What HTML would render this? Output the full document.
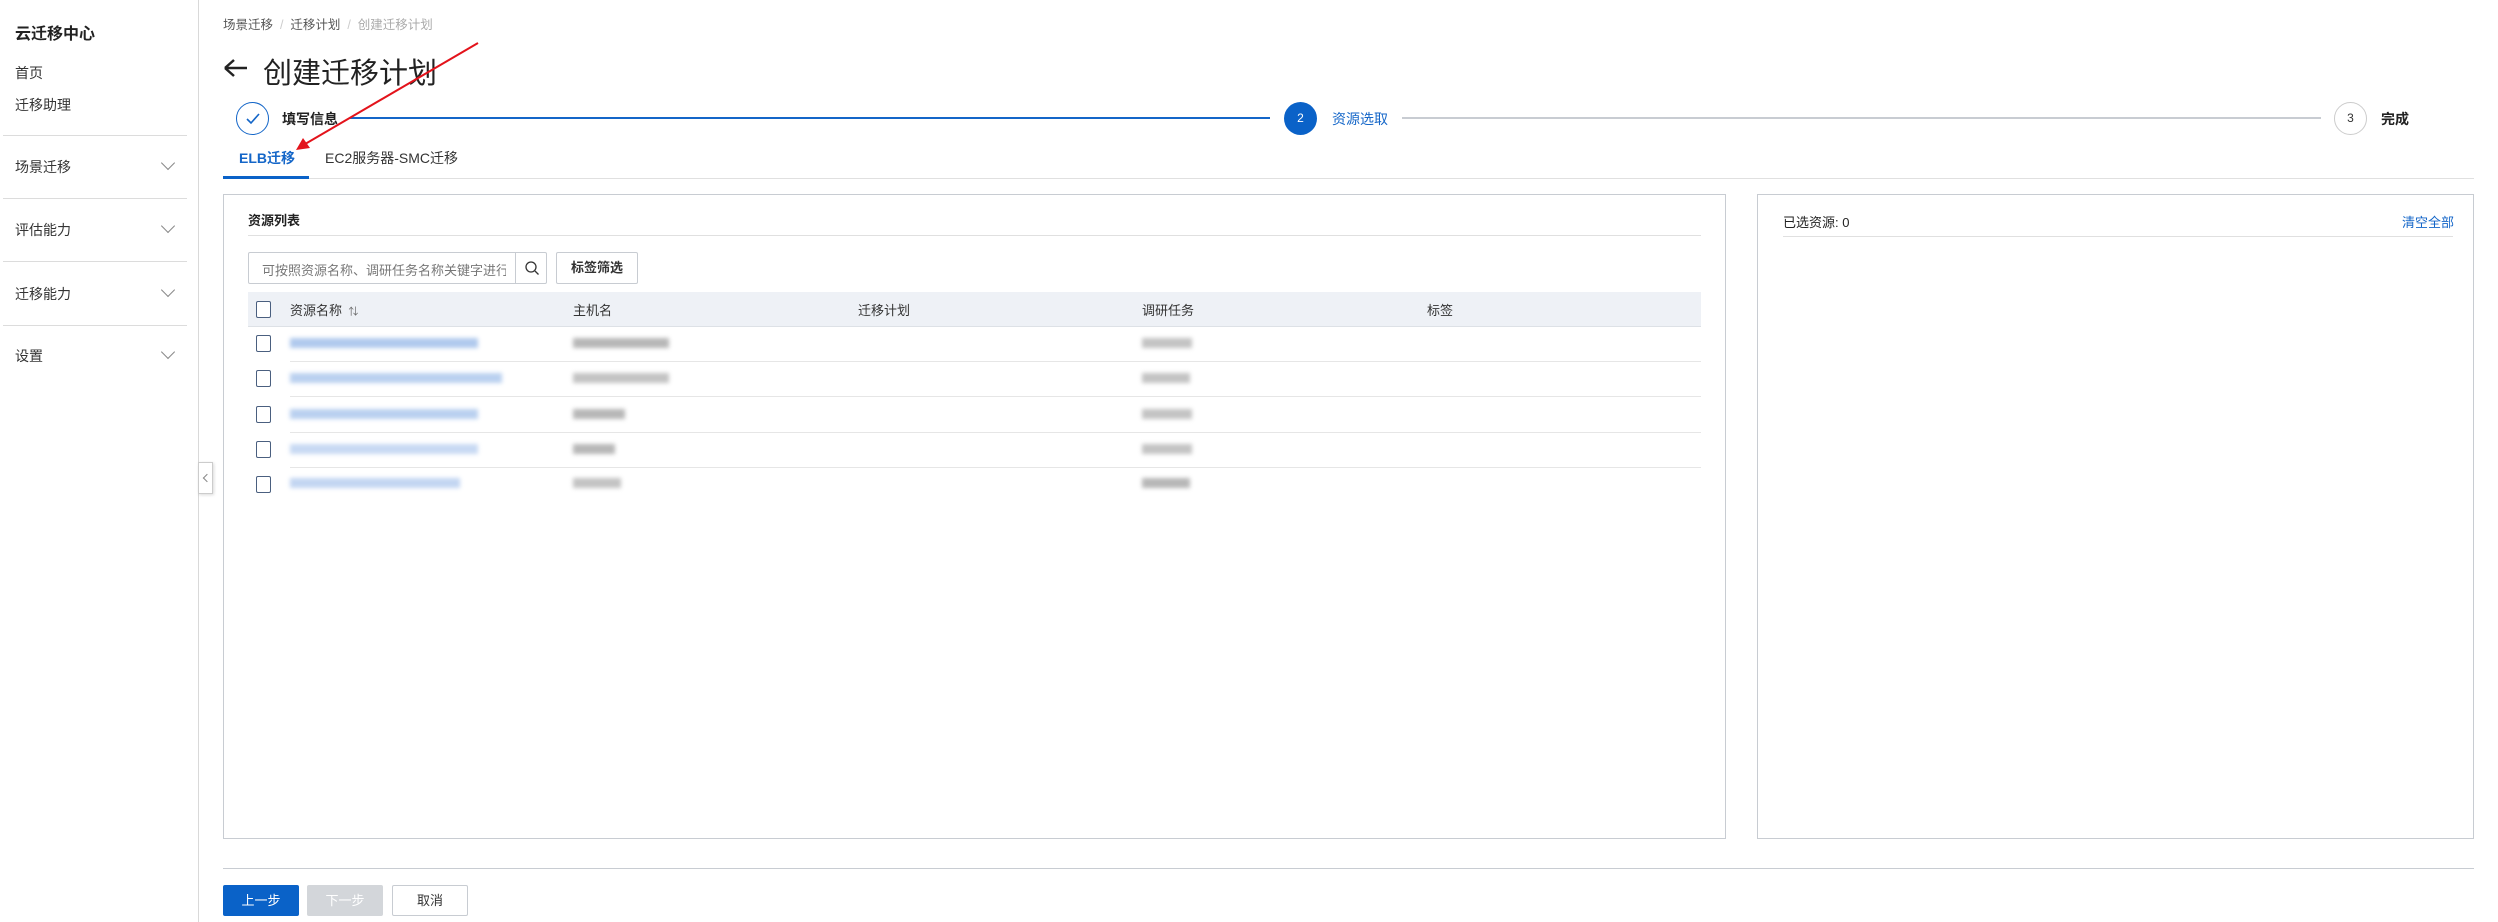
<!DOCTYPE html>
<html><head><meta charset="utf-8"><style>
*{box-sizing:border-box;margin:0;padding:0}
body{width:2498px;height:922px;background:#fff;font-family:"Liberation Sans","Noto Sans CJK SC",sans-serif;color:#333;position:relative;overflow:hidden;font-size:14px}
.a{position:absolute}
.side{left:0;top:0;width:199px;height:922px;border-right:1px solid #d9d9d9;background:#fff}
.hr{height:1px;background:#dcdcdc}
.chev{width:10px;height:10px;border-right:1.5px solid #888;border-bottom:1.5px solid #888;transform:rotate(45deg)}
.blur{filter:blur(2px);opacity:.7}
.cb{width:15px;height:17px;border:1.5px solid #4a5f7f;border-radius:2px;background:#fff}
.btn{height:31px;line-height:31px;text-align:center;font-size:13px;border-radius:2px}
</style></head><body>
<div class="a side">
 <div class="a" style="left:15px;top:20px;font-size:16px;font-weight:bold;color:#222">云迁移中心</div>
 <div class="a" style="left:15px;top:63px;font-size:14px">首页</div>
 <div class="a" style="left:15px;top:95px;font-size:14px">迁移助理</div>
 <div class="a hr" style="left:3px;top:135px;width:184px"></div>
 <div class="a" style="left:15px;top:157px">场景迁移</div><div class="a chev" style="left:163px;top:158px"></div>
 <div class="a hr" style="left:3px;top:198px;width:184px"></div>
 <div class="a" style="left:15px;top:220px">评估能力</div><div class="a chev" style="left:163px;top:221px"></div>
 <div class="a hr" style="left:3px;top:261px;width:184px"></div>
 <div class="a" style="left:15px;top:284px">迁移能力</div><div class="a chev" style="left:163px;top:285px"></div>
 <div class="a hr" style="left:3px;top:325px;width:184px"></div>
 <div class="a" style="left:15px;top:346px">设置</div><div class="a chev" style="left:163px;top:347px"></div>
</div>
<div class="a" style="left:198px;top:462px;width:15px;height:32px;border:1px solid #ccc;background:#fff;box-shadow:1px 1px 3px rgba(0,0,0,.15)"><div class="a" style="left:5px;top:12px;width:6px;height:6px;border-left:1px solid #888;border-bottom:1px solid #888;transform:rotate(45deg)"></div></div>

<div class="a" style="left:223px;top:14px;font-size:12.5px;color:#555">场景迁移 <span style="color:#ccc">&nbsp;/&nbsp;</span> 迁移计划 <span style="color:#ccc">&nbsp;/&nbsp;</span> <span style="color:#aaa">创建迁移计划</span></div>
<svg class="a" style="left:222px;top:56px" width="28" height="24"><path d="M3 12H25M3 12L12 4M3 12L12 20" stroke="#222" stroke-width="2.5" fill="none"/></svg>
<div class="a" style="left:263px;top:50px;font-size:29px;color:#222">创建迁移计划</div>

<div class="a" style="left:236px;top:102px;width:33px;height:33px;border:1px solid #1466c8;border-radius:50%"></div>
<svg class="a" style="left:245px;top:112px" width="16" height="14"><path d="M2 7l4 4 8-9" stroke="#1466c8" stroke-width="1.6" fill="none"/></svg>
<div class="a" style="left:282px;top:109px;font-size:14px;font-weight:bold;color:#222">填写信息</div>
<div class="a" style="left:350px;top:117px;width:920px;height:1.5px;background:#1466c8"></div>
<div class="a" style="left:1284px;top:102px;width:33px;height:33px;background:#0a62c8;border-radius:50%;color:#fff;font-size:12px;text-align:center;line-height:33px">2</div>
<div class="a" style="left:1332px;top:109px;font-size:14px;color:#1466c8">资源选取</div>
<div class="a" style="left:1402px;top:117px;width:919px;height:1.5px;background:#c8ccd2"></div>
<div class="a" style="left:2334px;top:102px;width:33px;height:33px;border:1px solid #ccc;border-radius:50%;font-size:12px;text-align:center;line-height:31px">3</div>
<div class="a" style="left:2381px;top:109px;font-size:14px;font-weight:bold;color:#222">完成</div>

<div class="a" style="left:239px;top:148px;font-size:14px;font-weight:bold;color:#1466c8">ELB迁移</div>
<div class="a" style="left:325px;top:148px;font-size:14px;color:#333">EC2服务器-SMC迁移</div>
<div class="a" style="left:223px;top:178px;width:2251px;height:1px;background:#e0e0e0"></div>
<div class="a" style="left:223px;top:176px;width:86px;height:3px;background:#0a62c8"></div>

<div class="a" style="left:223px;top:194px;width:1503px;height:645px;border:1px solid #c8ccd2"></div>
<div class="a" style="left:248px;top:210px;font-size:13px;font-weight:bold;color:#222">资源列表</div>
<div class="a" style="left:248px;top:235px;width:1453px;height:1px;background:#e0e0e0"></div>
<div class="a" style="left:248px;top:252px;width:299px;height:32px;border:1px solid #c8ccd2;border-radius:2px"></div>
<div class="a" style="left:262px;top:260px;font-size:13px;color:#777;width:244px;overflow:hidden;white-space:nowrap">可按照资源名称、调研任务名称关键字进行模糊</div>
<div class="a" style="left:515px;top:252px;width:1px;height:32px;background:#c8ccd2"></div>
<svg class="a" style="left:524px;top:260px" width="16" height="16"><circle cx="7" cy="7" r="5" stroke="#333" stroke-width="1.3" fill="none"/><path d="M11 11l3.5 3.5" stroke="#333" stroke-width="1.3"/></svg>
<div class="a btn" style="left:556px;top:252px;width:82px;height:32px;line-height:30px;border:1px solid #c8ccd2;font-weight:bold">标签筛选</div>
<div class="a" style="left:248px;top:292px;width:1453px;height:35px;background:#eef1f6;border-bottom:1px solid #dde1e6"></div>
<div class="a cb" style="left:256px;top:301px"></div>
<div class="a" style="left:290px;top:300px;font-size:13px">资源名称 <span style="font-size:10px;color:#666">&nbsp;⇅</span></div>
<div class="a" style="left:573px;top:300px;font-size:13px">主机名</div>
<div class="a" style="left:858px;top:300px;font-size:13px">迁移计划</div>
<div class="a" style="left:1142px;top:300px;font-size:13px">调研任务</div>
<div class="a" style="left:1427px;top:300px;font-size:13px">标签</div>

<div class="a" style="left:290px;top:361px;width:1411px;height:1px;background:#e6e6e6"></div>
<div class="a" style="left:290px;top:396px;width:1411px;height:1px;background:#e6e6e6"></div>
<div class="a" style="left:290px;top:432px;width:1411px;height:1px;background:#e6e6e6"></div>
<div class="a" style="left:290px;top:467px;width:1411px;height:1px;background:#e6e6e6"></div>

<div class="a cb" style="left:256px;top:335px"></div><div class="a cb" style="left:256px;top:370px"></div><div class="a cb" style="left:256px;top:406px"></div><div class="a cb" style="left:256px;top:441px"></div><div class="a cb" style="left:256px;top:476px"></div>

<div class="a blur" style="left:290px;top:338px;width:188px;height:10px;background:#8fb3e6"></div>
<div class="a blur" style="left:290px;top:373px;width:212px;height:10px;background:#9dbde9"></div>
<div class="a blur" style="left:290px;top:409px;width:188px;height:10px;background:#9dbde9"></div>
<div class="a blur" style="left:290px;top:444px;width:188px;height:10px;background:#b0c9ee"></div>
<div class="a blur" style="left:290px;top:478px;width:170px;height:10px;background:#a9c4ec"></div>
<div class="a blur" style="left:573px;top:338px;width:96px;height:10px;background:#999"></div>
<div class="a blur" style="left:573px;top:373px;width:96px;height:10px;background:#aaa"></div>
<div class="a blur" style="left:573px;top:409px;width:52px;height:10px;background:#999"></div>
<div class="a blur" style="left:573px;top:444px;width:42px;height:10px;background:#999"></div>
<div class="a blur" style="left:573px;top:478px;width:48px;height:10px;background:#aaa"></div>
<div class="a blur" style="left:1142px;top:338px;width:50px;height:10px;background:#aaa"></div>
<div class="a blur" style="left:1142px;top:373px;width:48px;height:10px;background:#aaa"></div>
<div class="a blur" style="left:1142px;top:409px;width:50px;height:10px;background:#aaa"></div>
<div class="a blur" style="left:1142px;top:444px;width:50px;height:10px;background:#aaa"></div>
<div class="a blur" style="left:1142px;top:478px;width:48px;height:10px;background:#999"></div>

<div class="a" style="left:1757px;top:194px;width:717px;height:645px;border:1px solid #c8ccd2"></div>
<div class="a" style="left:1783px;top:212px;font-size:13px;color:#222">已选资源: 0</div>
<div class="a" style="left:2402px;top:212px;font-size:13px;color:#1466c8">清空全部</div>
<div class="a" style="left:1783px;top:236px;width:670px;height:1px;background:#e0e0e0"></div>

<div class="a" style="left:223px;top:868px;width:2251px;height:1px;background:#c8ccd2"></div>
<div class="a btn" style="left:223px;top:885px;width:76px;background:#0a62c8;color:#fff">上一步</div>
<div class="a btn" style="left:307px;top:885px;width:76px;background:#d3d6da;color:#fff">下一步</div>
<div class="a btn" style="left:392px;top:885px;width:76px;border:1px solid #c8ccd2;line-height:29px">取消</div>

<svg class="a" style="left:0;top:0" width="600" height="200"><path d="M478 43L300 147" stroke="#e3131b" stroke-width="2" fill="none"/><path d="M296 150L303 138L310 148Z" fill="#e3131b"/></svg>
</body></html>
